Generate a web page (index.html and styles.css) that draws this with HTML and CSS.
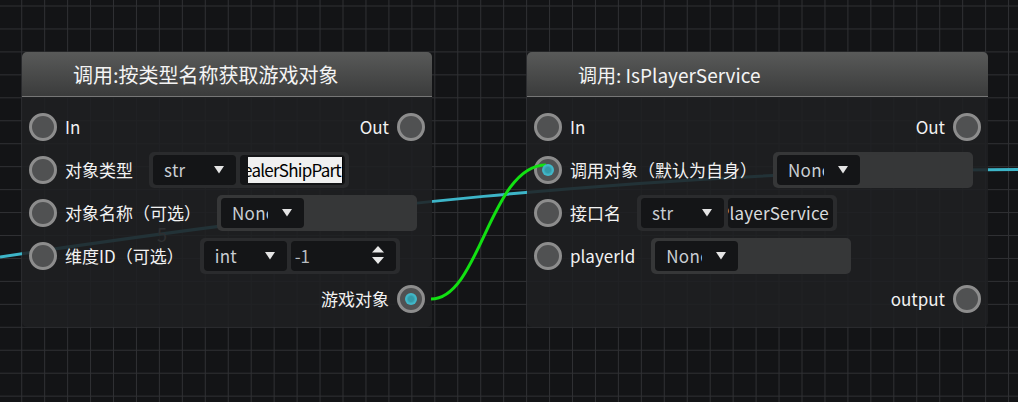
FILE: index.html
```html
<!DOCTYPE html>
<html lang="zh">
<head>
<meta charset="utf-8">
<title>Node Graph</title>
<link rel="stylesheet" href="styles.css">
</head>
<body>
<div class="canvas">
  <svg class="grid" width="1018" height="402">
    <defs>
      <pattern id="gridpat" x="21.2" y="5.5" width="22.95" height="22.95" patternUnits="userSpaceOnUse">
        <path d="M0 0.5H22.95M0.5 0V22.95" stroke="#2f3033" stroke-width="1" fill="none"/>
      </pattern>
    </defs>
    <rect width="1018" height="402" fill="url(#gridpat)"/>
  </svg>

  <svg class="wires" width="1018" height="402">
    <path d="M0 257 C 300 212 650 169.5 1018 169.5" stroke="#3db5c8" stroke-width="3" fill="none"/>
    <text x="157" y="242" class="wire-label">5</text>
  </svg>

  <div class="node node-a">
    <div class="node-head head-a">调用:按类型名称获取游戏对象</div>
    <div class="node-body">
      <div class="row">
        <span class="port"></span><span class="label">In</span>
        <span class="spacer"></span>
        <span class="label label-r">Out</span><span class="port"></span>
      </div>
      <div class="row">
        <span class="port"></span><span class="label">对象类型</span>
        <div class="wbox">
          <div class="select"><span class="sel-text">str</span><svg class="caret" width="10" height="8"><polygon points="0,0 10,0 5,7.5"/></svg></div>
          <div class="input focus"><div class="edit-white"><span>DealerShipPart</span></div></div>
        </div>
      </div>
      <div class="row">
        <span class="port"></span><span class="label">对象名称（可选）</span>
        <div class="wbox light">
          <div class="select"><span class="sel-text">None</span><svg class="caret" width="10" height="8"><polygon points="0,0 10,0 5,7.5"/></svg></div>
        </div>
      </div>
      <div class="row">
        <span class="port"></span><span class="label">维度ID（可选）</span>
        <div class="wbox">
          <div class="select"><span class="sel-text">int</span><svg class="caret" width="10" height="8"><polygon points="0,0 10,0 5,7.5"/></svg></div>
          <div class="spin"><span>-1</span><svg class="spin-arrows" width="12" height="19"><polygon points="0,6.5 6,0 12,6.5"/><polygon points="0,11 12,11 6,18"/></svg></div>
        </div>
      </div>
      <div class="row">
        <span class="spacer"></span>
        <span class="label label-r">游戏对象</span><span class="port linked"></span>
      </div>
    </div>
  </div>

  <div class="node node-b">
    <div class="node-head head-b">调用: IsPlayerService</div>
    <div class="node-body">
      <div class="row">
        <span class="port"></span><span class="label">In</span>
        <span class="spacer"></span>
        <span class="label label-r">Out</span><span class="port"></span>
      </div>
      <div class="row">
        <span class="port linked"></span><span class="label">调用对象（默认为自身）</span>
        <div class="wbox light">
          <div class="select"><span class="sel-text">None</span><svg class="caret" width="10" height="8"><polygon points="0,0 10,0 5,7.5"/></svg></div>
        </div>
      </div>
      <div class="row">
        <span class="port"></span><span class="label">接口名</span>
        <div class="wbox">
          <div class="select"><span class="sel-text">str</span><svg class="caret" width="10" height="8"><polygon points="0,0 10,0 5,7.5"/></svg></div>
          <div class="input"><span>IsPlayerService</span></div>
        </div>
      </div>
      <div class="row">
        <span class="port"></span><span class="label">playerId</span>
        <div class="wbox light">
          <div class="select"><span class="sel-text">None</span><svg class="caret" width="10" height="8"><polygon points="0,0 10,0 5,7.5"/></svg></div>
        </div>
      </div>
      <div class="row">
        <span class="spacer"></span>
        <span class="label label-r">output</span><span class="port"></span>
      </div>
    </div>
  </div>

  <svg class="wires-top" width="1018" height="402">
    <path d="M431 299 C 480 299 490 165 546 165" stroke="#12e012" stroke-width="3" fill="none"/>
  </svg>
</div>
</body>
</html>
```

FILE: styles.css
```css
* { box-sizing: border-box; }
html, body { margin: 0; padding: 0; }
body {
  background: #131416;
  font-family: "Noto Sans CJK SC", "Noto Sans", sans-serif;
}
.canvas {
  position: relative;
  width: 1018px;
  height: 402px;
  overflow: hidden;
  background: #131416;
}
.grid, .wires, .wires-top {
  position: absolute;
  left: 0;
  top: 0;
}
.wires-top { z-index: 2; pointer-events: none; }
.wire-label {
  font-family: "Noto Sans CJK SC", sans-serif;
  font-size: 18px;
  fill: #9a9a9a;
}

.node {
  position: absolute;
  top: 52px;
  height: 275px;
  border-radius: 5px;
  background: rgba(31, 32, 34, 0.88);
  display: flex;
  flex-direction: column;
}
.node-a { left: 22px; width: 410px; }
.node-b { left: 527px; width: 461px; }

.node-head {
  flex: none;
  height: 45px;
  display: flex;
  align-items: center;
  padding-left: 51px;
  color: #f4f4f4;
  background: linear-gradient(rgba(92, 93, 92, 0.95), rgba(60, 61, 61, 0.95));
  border-radius: 5px 5px 0 0;
  border-bottom: 1px solid #767676;
  white-space: nowrap;
}
.head-a { font-size: 20px; }
.head-b { font-size: 19px; }

.node-body {
  display: flex;
  flex-direction: column;
  padding: 8px 7px 0 7px;
}
.row {
  height: 43px;
  display: flex;
  align-items: center;
}
.spacer { flex: 1; }
.port {
  flex: none;
  position: relative;
  width: 28px;
  height: 28px;
  border-radius: 50%;
  border: 3px solid #8d8d8d;
  background: #505152;
}
.port.linked::after {
  content: "";
  position: absolute;
  left: 50%;
  top: 50%;
  width: 12px;
  height: 12px;
  margin: -6px 0 0 -6px;
  border-radius: 50%;
  background: radial-gradient(circle, #3399a7 0 30%, #41b7c8 55%);
  z-index: 3;
}
.label {
  margin-left: 8px;
  font-size: 17px;
  color: #f2f2f2;
  white-space: nowrap;
}
.label-r { margin-left: 0; margin-right: 8px; }

.wbox {
  flex: none;
  margin-left: 16px;
  width: 200px;
  height: 36px;
  padding: 3px 4px;
  display: flex;
  align-items: flex-start;
  gap: 4px;
  border-radius: 5px;
  background: #2a2b2d;
}
.wbox.light { background: #363738; }

.select {
  flex: none;
  width: 83px;
  height: 30px;
  padding: 0 12px 0 11px;
  display: flex;
  align-items: center;
  border-radius: 4px;
  background: #141517;
  color: #c9ced3;
  font-size: 17px;
  letter-spacing: 0.3px;
}
.sel-text {
  width: 36px;
  overflow: hidden;
  white-space: nowrap;
  flex: none;
}
.caret { margin-left: auto; fill: #e4e4e4; flex: none; }

.input {
  flex: 1;
  min-width: 0;
  height: 30px;
  padding: 0 4px;
  display: flex;
  align-items: center;
  justify-content: flex-end;
  overflow: hidden;
  border-radius: 4px;
  background: #141517;
  color: #d8dbde;
  font-size: 17px;
  letter-spacing: 0.2px;
  white-space: nowrap;
}
.input.focus { padding: 2px 2px 2px 8px; }
.edit-white {
  flex: 1;
  min-width: 0;
  height: 100%;
  display: flex;
  align-items: center;
  justify-content: flex-end;
  overflow: hidden;
  background: #f0f0f0;
  color: #000;
  letter-spacing: -0.75px;
  border-right: 1px solid #000;
  padding-right: 1px;
}
.spin {
  flex: 1;
  height: 30px;
  padding: 0 12px 0 4px;
  display: flex;
  align-items: center;
  border-radius: 4px;
  background: #141517;
  color: #b8bcc0;
  font-size: 17px;
}
.spin-arrows { margin-left: auto; fill: #e8e8e8; }
```
